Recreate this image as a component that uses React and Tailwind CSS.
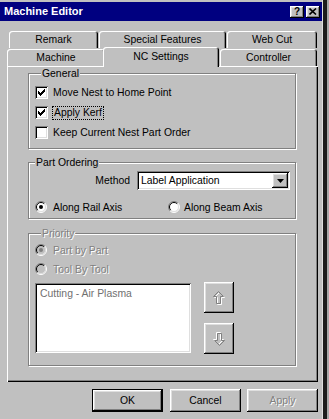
const raised = "shadow-[inset_-1px_-1px_#000,inset_1px_1px_#fff,inset_-2px_-2px_#808080,inset_2px_2px_#dfdfdf]";
const sunken = "shadow-[inset_1px_1px_#808080,inset_-1px_-1px_#fff,inset_2px_2px_#000,inset_-2px_-2px_#dfdfdf]";
const disabledText = "text-[#808080] [text-shadow:1px_1px_0_#fff]";

function Check({ checked }) {
  const cols = [2, 3, 4, 3, 2, 1, 0];
  return (
    <div className={`w-[13px] h-[13px] bg-white flex items-center justify-center shrink-0 ${sunken}`}>
      {checked && (
        <svg width="7" height="7" viewBox="0 0 7 7">
          {cols.map((y, i) => (
            <rect key={i} x={i} y={y} width="1" height="3" fill="#000" />
          ))}
        </svg>
      )}
    </div>
  );
}

function Radio({ checked, disabled }) {
  return (
    <svg width="12" height="12" viewBox="0 0 12 12" className="shrink-0">
      <circle cx="6" cy="6" r="5" fill={disabled ? "#c0c0c0" : "#fff"} />
      <path d="M2.1 9.9 A5.5 5.5 0 0 1 9.9 2.1" stroke="#808080" strokeWidth="1" fill="none" />
      <path d="M9.9 2.1 A5.5 5.5 0 0 1 2.1 9.9" stroke="#fff" strokeWidth="1" fill="none" />
      <path d="M2.8 9.2 A4.5 4.5 0 0 1 9.2 2.8" stroke="#000" strokeWidth="1" fill="none" />
      <path d="M9.2 2.8 A4.5 4.5 0 0 1 2.8 9.2" stroke="#dfdfdf" strokeWidth="1" fill="none" />
      {checked && <circle cx="6" cy="6" r="2" fill={disabled ? "#808080" : "#000"} />}
    </svg>
  );
}

function Tab({ label, className = "" }) {
  return (
    <div
      className={`bg-[#c0c0c0] rounded-t-[3px] flex items-center justify-center shadow-[inset_1px_1px_#fff,inset_-1px_0_#000,inset_-2px_0_#808080] ${className}`}
    >
      {label}
    </div>
  );
}

function Arrow({ down }) {
  return (
    <svg width="14" height="16" viewBox="0 0 14 16" className={down ? "rotate-180" : ""}>
      <polygon points="7.5,2.5 12.5,7.5 9.5,7.5 9.5,14.5 5.5,14.5 5.5,7.5 2.5,7.5" fill="none" stroke="#fff" strokeWidth="1" />
      <polygon points="6.5,1.5 11.5,6.5 8.5,6.5 8.5,13.5 4.5,13.5 4.5,6.5 1.5,6.5" fill="none" stroke="#808080" strokeWidth="1" />
    </svg>
  );
}

function Button({ children, isDefault, disabled }) {
  return (
    <div
      className={`w-[71px] h-[23px] flex items-center justify-center bg-[#c0c0c0] ${
        isDefault
          ? "shadow-[inset_0_0_0_1px_#000,inset_-2px_-2px_#000,inset_2px_2px_#fff,inset_-3px_-3px_#808080,inset_3px_3px_#dfdfdf]"
          : raised
      } ${disabled ? disabledText : ""}`}
    >
      {children}
    </div>
  );
}

export default function App() {
  return (
    <div className="w-[329px] h-[419px] bg-[#c0c0c0] overflow-hidden flex font-['Liberation_Sans',Arial,sans-serif] text-[10.4px] text-black leading-[13px]">
      <div className="w-[322px] flex flex-col pt-[2px]">
        {/* Title bar */}
        <div className="h-[19px] bg-[#000080] flex items-center pl-[4px] pr-[2px]">
          <span className="flex-1 text-white font-bold text-[11px]">Machine Editor</span>
          <div className={`w-[14px] h-[12px] bg-[#c0c0c0] flex items-center justify-center font-bold text-[10px] leading-none text-black ${raised}`}>?</div>
          <div className={`w-[14px] h-[12px] ml-[2px] bg-[#c0c0c0] flex items-center justify-center ${raised}`}>
            <svg width="8" height="7" viewBox="0 0 8 7">
              <path d="M0.5 0.5 L7 6.5 M7 0.5 L0.5 6.5" stroke="#000" strokeWidth="1.6" />
            </svg>
          </div>
        </div>

        {/* Tabs back row */}
        <div className="flex ml-[9px] mt-[10px] h-[17px]">
          <Tab label="Remark" className="w-[89px] h-[17px]" />
          <Tab label="Special Features" className="w-[127px] h-[17px] ml-[1px]" />
          <Tab label="Web Cut" className="w-[90px] h-[17px] ml-[1px]" />
        </div>
        {/* Tabs front row */}
        <div className="flex items-end ml-[7px] h-[18px]">
          <Tab label="Machine" className="w-[98px] h-[17px]" />
          <Tab label="NC Settings" className="w-[116px] h-[20px] -ml-[2px] -mb-[1px] relative z-10 pb-[2px]" />
          <Tab label="Controller" className="w-[97px] h-[17px] ml-[1px]" />
        </div>

        {/* Panel */}
        <div className="ml-[7px] w-[311px] h-[316px] pt-[1px] pl-[21px] flex flex-col shadow-[inset_1px_1px_#fff,inset_-1px_-1px_#000,inset_-2px_-2px_#808080]">
          {/* General */}
          <fieldset className="w-[268px] h-[82px] border border-[#808080] shadow-[inset_1px_1px_#fff,1px_1px_#fff] pl-[6px]">
            <legend className="ml-[6px] px-[1px] bg-[#c0c0c0]">General</legend>
            <div className="flex flex-col gap-[7px] pt-[6px]">
              <div className="flex items-center h-[13px] gap-[5px]">
                <Check checked />
                <span>Move Nest to Home Point</span>
              </div>
              <div className="flex items-center h-[13px] gap-[4px]">
                <Check checked />
                <span className="border border-dotted border-black px-[1px] leading-[12px]">Apply Kerf</span>
              </div>
              <div className="flex items-center h-[13px] gap-[5px]">
                <Check />
                <span>Keep Current Nest Part Order</span>
              </div>
            </div>
          </fieldset>

          {/* Part Ordering */}
          <fieldset className="w-[268px] h-[63px] mt-[7px] border border-[#808080] shadow-[inset_1px_1px_#fff,1px_1px_#fff]">
            <legend className="ml-[6px] px-[1px] bg-[#c0c0c0]">Part Ordering</legend>
            <div className="flex justify-end items-center gap-[7px] pr-[5px] pt-[2px]">
              <span>Method</span>
              <div className={`w-[153px] h-[19px] bg-white flex items-center pl-[4px] pr-[2px] ${sunken}`}>
                <span className="flex-1">Label Application</span>
                <div className={`w-[16px] h-[15px] bg-[#c0c0c0] flex items-center justify-center ${raised}`}>
                  <svg width="7" height="4" viewBox="0 0 7 4">
                    <polygon points="0,0 7,0 3.5,4" fill="#000" />
                  </svg>
                </div>
              </div>
            </div>
            <div className="flex items-center h-[12px] mt-[11px] pl-[6px]">
              <div className="flex items-center gap-[6px] w-[133px]">
                <Radio checked />
                <span>Along Rail Axis</span>
              </div>
              <div className="flex items-center gap-[4px]">
                <Radio />
                <span>Along Beam Axis</span>
              </div>
            </div>
          </fieldset>

          {/* Priority */}
          <fieldset className="w-[268px] h-[139px] mt-[8px] border border-[#808080] shadow-[inset_1px_1px_#fff,1px_1px_#fff] pl-[6px]">
            <legend className={`ml-[6px] px-[1px] bg-[#c0c0c0] ${disabledText}`}>Priority</legend>
            <div className="flex flex-col gap-[7px] pt-[4px]">
              <div className="flex items-center h-[12px] gap-[6px]">
                <Radio checked disabled />
                <span className={disabledText}>Part by Part</span>
              </div>
              <div className="flex items-center h-[12px] gap-[6px]">
                <Radio disabled />
                <span className={disabledText}>Tool By Tool</span>
              </div>
            </div>
            <div className="flex mt-[8px]">
              <div className={`w-[156px] h-[70px] bg-white pl-[5px] pt-[4px] text-[#707070] ${sunken}`}>
                Cutting - Air Plasma
              </div>
              <div className="flex flex-col ml-[13px] gap-[10px] -mt-[1px]">
                <div className={`w-[30px] h-[31px] flex items-center justify-center ${raised}`}>
                  <Arrow />
                </div>
                <div className={`w-[30px] h-[31px] flex items-center justify-center ${raised}`}>
                  <Arrow down />
                </div>
              </div>
            </div>
          </fieldset>
        </div>

        {/* Bottom buttons */}
        <div className="flex ml-[92px] mt-[7px]">
          <Button isDefault>OK</Button>
          <div className="ml-[7px]">
            <Button>Cancel</Button>
          </div>
          <div className="ml-[6px]">
            <Button disabled>Apply</Button>
          </div>
        </div>
      </div>

      {/* Right frame */}
      <div className="flex">
        <div className="w-[1px] bg-[#dfdfdf]" />
        <div className="w-[4px] bg-[#1c1c1c]" />
        <div className="w-[2px] bg-[#a8a8a8]" />
      </div>
    </div>
  );
}
